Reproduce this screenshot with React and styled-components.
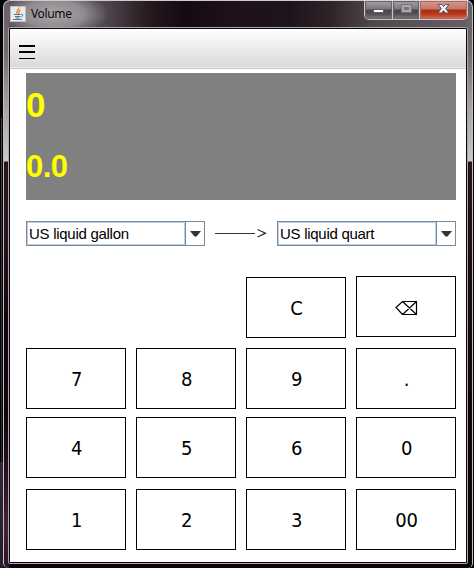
import React from "react";
import styled, { createGlobalStyle } from "styled-components";

const GlobalStyle = createGlobalStyle`
  * { box-sizing: border-box; }
  body { margin: 0; overflow: hidden; background: #030304; }
`;

const Desktop = styled.div`
  width: 474px;
  height: 568px;
  padding: 0 1px 0 3px;
  background:
    linear-gradient(#444448, #29292c) 1px 118px / 1px 344px no-repeat,
    linear-gradient(#302838, #241e2a) 0 462px / 3px 106px no-repeat,
    #030304;
`;

const Frame = styled.div`
  width: 470px;
  height: 568px;
  display: flex;
  flex-direction: column;
  border: 1px solid #c3c0c4;
  border-bottom: 0;
  border-top-color: #cdcccc;
  border-radius: 7px 7px 5px 5px;
  padding: 0 4px;
  background:
    linear-gradient(#6a6168, #71686e 50px, #aaa4a9 110px, #cbc7ca 160px, #28131f 161px, #2a1320 230px, #12040e 320px, #12040e 420px, #44203b 530px, #2d1426) 0 0 / 5px 100% no-repeat,
    linear-gradient(#655e62, #71686e 50px, #aaa4a9 110px, #cbc7ca 160px, #28131f 161px, #1b0b17 280px, #12040e 420px, #0d030a) 100% 0 / 5px 100% no-repeat,
    linear-gradient(#10020c, #10020c) 0 100% / 100% 5px no-repeat,
    radial-gradient(ellipse 54px 24px at 50px 13px, #aaa5a9 0, #928b91 55%, transparent 100%),
    linear-gradient(90deg, #574e54, #51484f 100px, #26191f 145px, #150914 180px, #1f111a 230px, #1d141b 285px, #2c2228 325px, #51484d 370px, #675f63);
`;

const TitleBar = styled.header`
  height: 26px;
  flex: none;
  display: flex;
  justify-content: space-between;
  padding-left: 2px;
`;

const Title = styled.div`
  display: flex;
  align-items: flex-start;
  gap: 5px;
  padding-top: 5px;
  font: 12px/16px "Noto Sans", sans-serif;
  color: #08080a;
  svg { display: block; }
  span { letter-spacing: -0.35px; }
`;

const WindowControls = styled.div`
  display: flex;
  width: 104px;
  height: 20px;
  margin-top: -1px;
  border: 1px solid #c9c5c7;
  border-top-color: #d8d6d7;
  border-radius: 0 0 5px 5px;
  overflow: hidden;
`;

const Control = styled.button`
  width: ${(p) => p.$width}px;
  height: 100%;
  padding: 0;
  border: 0;
  border-right: ${(p) => (p.$close ? "0" : "1px solid #c9c5c7")};
  display: flex;
  align-items: flex-start;
  justify-content: center;
  box-shadow: inset 0 0 0 1px ${(p) => (p.$close ? "#ac6c5c" : "#656067")};
  background: ${(p) =>
    p.$close
      ? "linear-gradient(#d39a8c, #c7766a 8px, #a92b14 9px, #bd3519 13px, #d7735b)"
      : "linear-gradient(#a4a0a4, #7d777c 8px, #4b434a 9px, #554e54 13px, #817b81)"};
  svg { display: block; }
`;

const Client = styled.main`
  width: 460px;
  height: 537px;
  flex: none;
  border: 1px solid #aaa6a9;
  border-radius: 2px;
  background: #0b0509;
  padding: 1px;
`;

const Content = styled.div`
  width: 456px;
  height: 533px;
  background: #fff;
`;

const MenuBar = styled.nav`
  height: 40px;
  border-bottom: 1px solid #c8c8c8;
  background: linear-gradient(#fff, #dadada 38px, #eeeeee 38px);
  padding: 16px 0 0 9px;
  svg { display: block; }
`;

const Converter = styled.div`
  padding: 4px 10px 0 16px;
`;

const Display = styled.section`
  height: 127px;
  background: #808080;
  color: #ff0;
  font-family: "Liberation Sans", Arial, sans-serif;
  font-weight: bold;
`;

const Reading = styled.div`
  height: ${(p) => p.$height}px;
  line-height: ${(p) => p.$height}px;
  font-size: ${(p) => p.$size}px;
  letter-spacing: ${(p) => p.$tracking || 0}px;
`;

const Units = styled.div`
  display: flex;
  justify-content: space-between;
  align-items: center;
  height: 25px;
  margin-top: 21px;
`;

const Combo = styled.button`
  display: grid;
  grid-template-columns: 158px 1px 18px;
  width: 179px;
  height: 25px;
  padding: 0;
  border: 1px solid #7a8a99;
  background: #fff;
`;

const ComboValue = styled.span`
  height: 23px;
  border: 1px solid #b8cfe5;
  padding-left: 1px;
  text-align: left;
  white-space: nowrap;
  font: 15px/22px "Liberation Sans", Arial, sans-serif;
  letter-spacing: -0.28px;
  color: #000;
`;

const Divider = styled.span`
  height: 23px;
  background: #7a8a99;
`;

const ComboArrow = styled.span`
  display: flex;
  padding: 9px 0 0 4px;
  svg { display: block; }
`;

const Keypad = styled.div`
  display: flex;
  flex-direction: column;
  padding-top: 30px;
`;

const KeyRow = styled.div`
  display: flex;
  justify-content: flex-end;
  gap: 10px;
  margin-bottom: ${(p) => p.$gap}px;
`;

const Key = styled.button`
  width: 100px;
  height: 61px;
  margin-top: ${(p) => p.$drop || 0}px;
  padding: 1px 0 0 1px;
  border: 1px solid #000;
  background: #fff;
  color: #000;
  display: flex;
  align-items: center;
  justify-content: center;
  font: 20px/24px "DejaVu Sans Condensed", "DejaVu Sans", sans-serif;
  font-stretch: condensed;
  letter-spacing: -0.3px;
`;

const JavaIcon = () => (
  <svg width="16" height="16" viewBox="0 0 16 16">
    <rect x="0.5" y="0.5" width="15" height="15" fill="#e8ebed" stroke="#b7c2ca" />
    <path d="M9 1.500C9.500 4 5 4.500 7.500 8M10.500 4C8 5.500 8.500 6.500 9 8" fill="none" stroke="#e98235" strokeWidth="1.3" />
    <path d="M4 8.500h6.500M5 10.500h5M5.500 12h4M3 13.500h9M10.500 8.500c3-1 3 2 0 2.500" fill="none" stroke="#51799b" />
  </svg>
);

const DownArrow = () => (
  <svg width="11" height="6" viewBox="0 0 11 6">
    <path d="M0 0h11L6.500 5.500h-2Z" fill="#333" />
  </svg>
);

const UnitCombo = ({ children }) => (
  <Combo>
    <ComboValue>{children}</ComboValue>
    <Divider />
    <ComboArrow><DownArrow /></ComboArrow>
  </Combo>
);

const Backspace = () => (
  <svg width="23" height="15" viewBox="0 0 23 15">
    <path d="M1 7.500 7.500 1.500H21.500V14.500H7.500ZM7.500 1.500 21.500 14.500M21.500 1.500 7.500 14.500" fill="none" stroke="#000" strokeWidth="1.200" />
  </svg>
);

const rows = [
  { keys: ["7", "8", "9", "."], gap: 8 },
  { keys: ["4", "5", "6", "0"], gap: 11 },
  { keys: ["1", "2", "3", "00"], gap: 0 },
];

export default function App() {
  return (
    <>
      <GlobalStyle />
      <Desktop>
        <Frame>
          <TitleBar>
            <Title><JavaIcon /><span>Volume</span></Title>
            <WindowControls>
              <Control $width={28} aria-label="Minimize">
                <svg width="13" height="18"><rect x="1.500" y="8.500" width="10" height="3" fill="#fff" stroke="#5e5b67" /></svg>
              </Control>
              <Control $width={27} aria-label="Maximize">
                <svg width="13" height="18"><path d="M1.500 3.500h10v8h-10ZM4.500 6.500v2h4v-2Z" fill="#aaa6aa" fillRule="evenodd" stroke="#77717a" /></svg>
              </Control>
              <Control $width={47} $close aria-label="Close">
                <svg width="13" height="18"><path d="M1 3.500H4.500L6.500 5.500 8.500 3.500H12L8.700 7.600 12 12H8.500L6.500 9.700 4.500 12H1L4.300 7.600Z" fill="#f5f5f5" stroke="#4f5261" /></svg>
              </Control>
            </WindowControls>
          </TitleBar>
          <Client>
            <Content>
              <MenuBar>
                <svg width="16" height="14"><path d="M0 0h16v2H0ZM0 6h16v2H0ZM0 13h16v1H0Z" fill="#000" /></svg>
              </MenuBar>
              <Converter>
                <Display>
                  <Reading $height={63} $size={35}>0</Reading>
                  <Reading $height={61} $size={31} $tracking={-0.6}>0.0</Reading>
                </Display>
                <Units>
                  <UnitCombo>US liquid gallon</UnitCombo>
                  <svg width="52" height="11"><path d="M0 5.500H40" stroke="#333" /><path d="M42.500 1.500 50.500 5.200 42.500 9" fill="none" stroke="#333" strokeWidth="1.300" /></svg>
                  <UnitCombo>US liquid quart</UnitCombo>
                </Units>
                <Keypad>
                  <KeyRow $gap={10}>
                    <Key $drop={1}>C</Key>
                    <Key aria-label="Backspace"><Backspace /></Key>
                  </KeyRow>
                  {rows.map((row) => (
                    <KeyRow key={row.keys[0]} $gap={row.gap}>
                      {row.keys.map((key) => <Key key={key}>{key}</Key>)}
                    </KeyRow>
                  ))}
                </Keypad>
              </Converter>
            </Content>
          </Client>
        </Frame>
      </Desktop>
    </>
  );
}
